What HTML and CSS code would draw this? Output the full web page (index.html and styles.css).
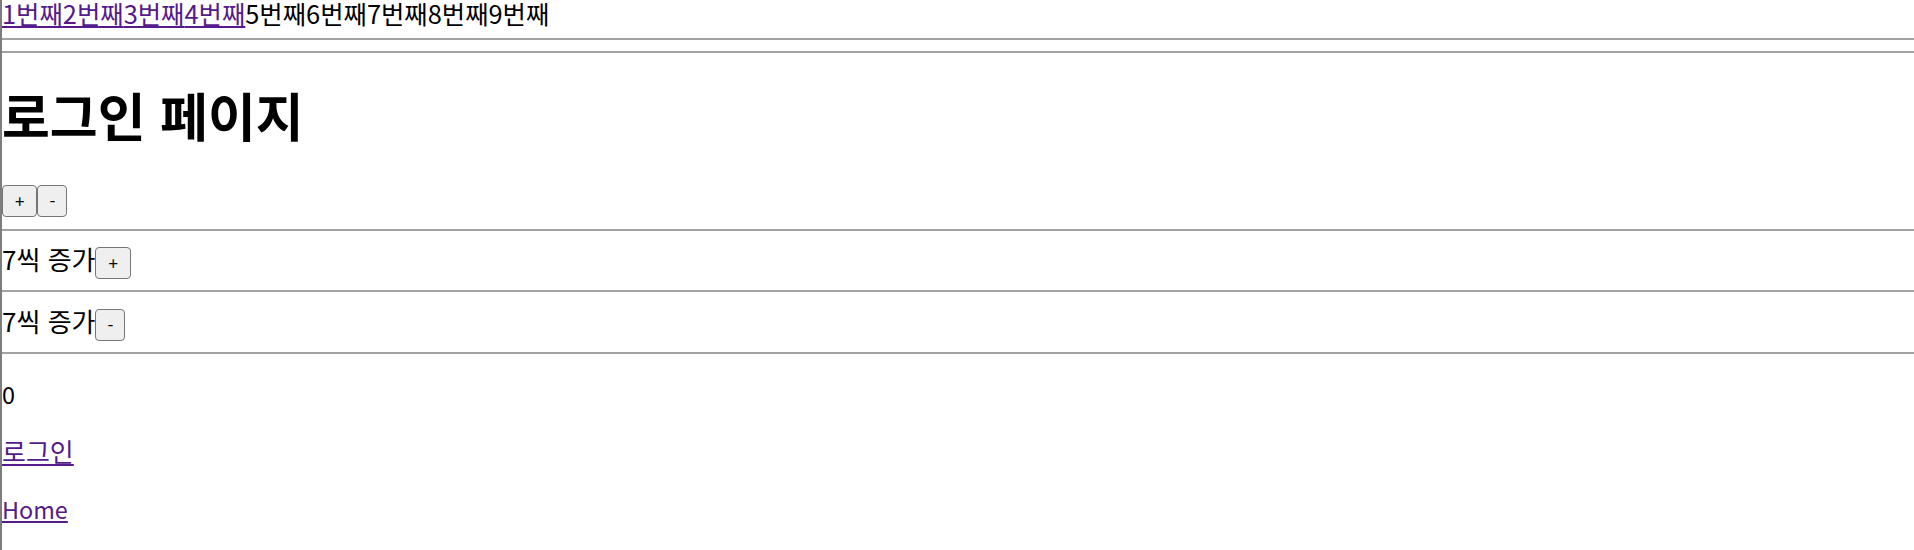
FILE: index.html
```html
<!DOCTYPE html>
<html lang="ko">
<head>
<meta charset="utf-8">
<title>로그인 페이지</title>
<link rel="stylesheet" href="styles.css">
</head>
<body>
<div class="page">
  <nav class="nav"><a href="#1">1번째</a><a href="#2">2번째</a><a href="#3">3번째</a><a href="#4">4번째</a><span>5번째</span><span>6번째</span><span>7번째</span><span>8번째</span><span>9번째</span></nav>
  <hr class="rule">
  <hr class="rule">
  <h1 class="title">로그인 페이지</h1>
  <div class="line"><button class="btn btn-plus">+</button><button class="btn btn-minus">-</button></div>
  <hr class="rule">
  <div class="line"><span class="ko">7씩 증가</span><button class="btn btn-plus">+</button></div>
  <hr class="rule">
  <div class="line"><span class="ko">7씩 증가</span><button class="btn btn-minus">-</button></div>
  <hr class="rule">
  <p class="para">0</p>
  <p class="para"><a class="ko" href="#login">로그인</a></p>
  <p class="para"><a href="#home">Home</a></p>
</div>
</body>
</html>
```

FILE: styles.css
```css
html, body {
  margin: 0;
  padding: 0;
  background: #ffffff;
}

body {
  font-family: "Noto Sans CJK KR", "Noto Sans", sans-serif;
  font-size: 23.4px;
  line-height: 34px;
  color: #000000;
}

.page {
  min-height: 550px;
  border-left: 2px solid #7d7d7d;
  box-sizing: border-box;
}

a {
  color: #551a8b;
  text-decoration: underline;
}

.ko {
  font-size: 26px;
}

.nav {
  font-size: 25.4px;
  line-height: 26px;
  white-space: nowrap;
}

.rule {
  margin: 11.7px 0;
  height: 0;
  border: none;
  border-top: 2px solid #a2a2a2;
}

.title {
  font-size: 52px;
  line-height: 68px;
  font-weight: 700;
  margin: 28px 0 32px;
}

.line {
  margin: 0;
}

.para {
  margin: 23px 0;
}

.btn {
  font-family: "Noto Sans CJK KR", "Noto Sans", sans-serif;
  font-size: 17px;
  height: 32px;
  margin: 0;
  padding: 0 12px;
  background: #efefef;
  border: 1px solid #767676;
  border-radius: 4px;
  color: #000000;
  vertical-align: baseline;
}

.btn-minus {
  padding: 0 11px;
}
```
